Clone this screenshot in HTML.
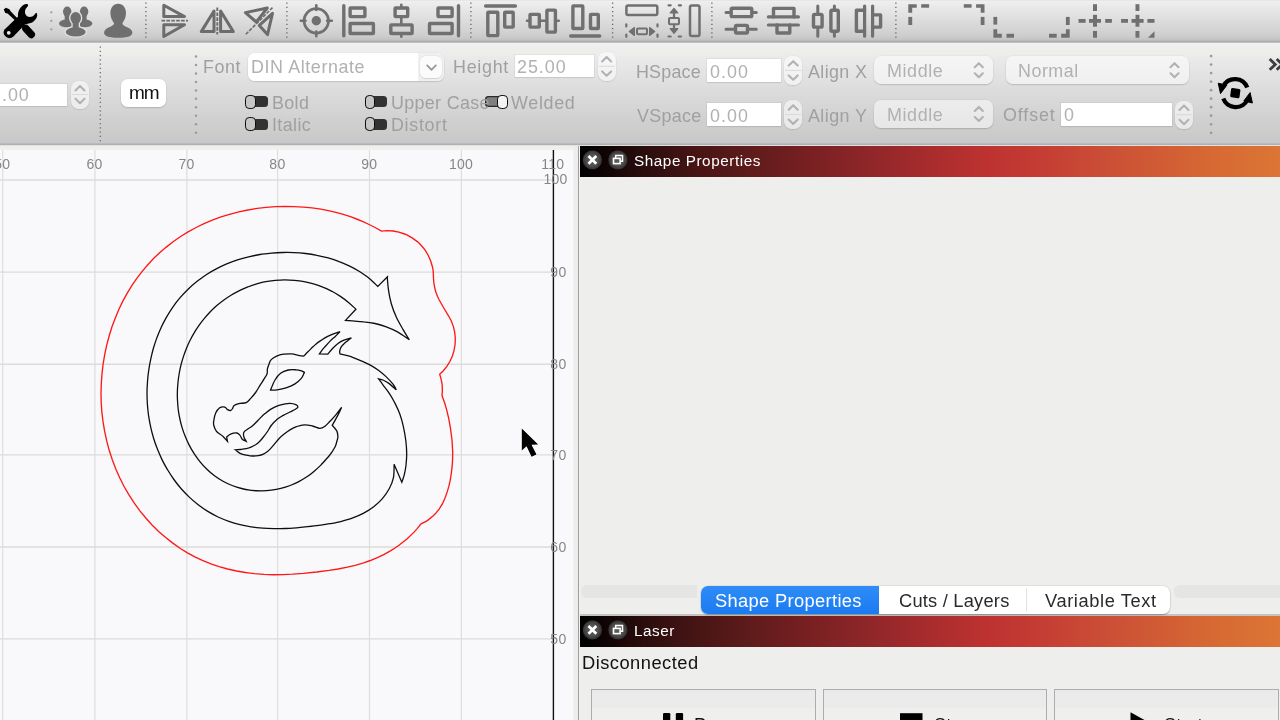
<!DOCTYPE html>
<html lang="en">
<head>
<meta charset="utf-8">
<title>LightBurn</title>
<style>
*{box-sizing:border-box;margin:0;padding:0}
html,body{width:1280px;height:720px;overflow:hidden;background:#eeeeec;font-family:"Liberation Sans",sans-serif;}
#tb1{position:absolute;left:0;top:0;width:1280px;height:43px;background:linear-gradient(#e2e2e0 0px,#efefed 1.500px,#ececec 4px,#e8e8e9 8px,#e2e2e2 15px,#dbdbdb 22px,#d4d4d3 30px,#cbcbcb 37px,#c2c2c2 40px,#adadad 41.500px,#b2b2b2 42.300px,#e2e2e2 43px);}
#tb2{position:absolute;left:0;top:43px;width:1280px;height:103px;background:linear-gradient(#f2f2f2 0px,#efefed 2px,#ededec 10px,#e9e9ea 17px,#e5e5e4 27px,#e0e0e1 38px,#dadad9 52px,#d5d5d6 66px,#d0d0d0 77px,#cdcdcc 88px,#cacacb 93px,#c9c9cb 99.500px,#bababc 100.500px,#b0b0b2 101.500px,#dcdcdc 102.300px,#efefed 103px);}
#canvas{position:absolute;left:0;top:146px;width:578px;height:574px;background:#f9f9fb;overflow:hidden}
#divider{position:absolute;left:577px;top:146px;width:3px;height:574px;background:linear-gradient(90deg,#ededeb 0,#ededeb .5px,#a4a4a6 .8px,#9c9c9e 1.200px,#a0a0a2 1.900px,#d8d8d8 2.200px,#f2f2f2 2.500px,#f0f0ee 3px)}
#panel{position:absolute;left:580px;top:146px;width:700px;height:574px;background:#eeeeec;overflow:hidden}
.title{position:absolute;left:0;width:700px;height:30.600px;background:linear-gradient(90deg,#000 0%,#0c0303 3%,#2a0d0d 9%,#451414 16%,#5e1b1b 24%,#761f21 32%,#8e2629 41%,#a82c2d 50%,#bd3231 58%,#c53d34 66%,#ca4c36 74%,#d05a35 82%,#d66933 90%,#dc7535 100%);color:#fff;font-size:15.5px;line-height:30px;white-space:nowrap}
.t{position:absolute;white-space:nowrap;line-height:1;will-change:transform}
.lbl{color:#a6a6a6}
.inp{position:absolute;background:#fff;box-shadow:0 0 0 1px rgba(0,0,0,.045),0 1px 1px rgba(0,0,0,.07)}
.sel{position:absolute;background:rgba(255,255,255,.52);border-radius:7px;box-shadow:0 0 0 .5px rgba(0,0,0,.05),0 1px 1.500px rgba(0,0,0,.15)}
.spin{position:absolute;border-radius:8px;background:rgba(255,255,255,.55);box-shadow:0 0 0 .5px rgba(0,0,0,.04),0 1px 1.2px rgba(0,0,0,.1)}
.tog{position:absolute;width:21.600px;height:11px;border-radius:3.500px;background:#323232}
.tog i{position:absolute;left:-.8px;top:-1.600px;width:10.800px;height:14.200px;border-radius:4.200px;border:1.900px solid #0c0c0c;background:#c6c6c6}
.tog.on{background:#7f7f7f;box-shadow:inset 0 0 0 1.300px #2a2a2a}
.tog.on i{left:auto;right:-.6px;background:#f2f2f2}
svg{position:absolute;left:0;top:0;overflow:visible;will-change:transform}
.btn{position:absolute;top:543.200px;height:40px;border:1px solid #adadad;background:linear-gradient(#e9e9e9 0,#ebebec 3px,#ebebec 17.500px,#efefed 19.500px,#efefed 40px);}
</style>
</head>
<body>
<div id="tb1">
<svg width="1280" height="43" viewBox="0 0 1280 43">
<!-- tools icon -->
<g fill="#000" stroke="none">
<path d="M3.700 9.400L5.900 7.700L9.400 9.300L10.400 10.900L17.500 18.500L15.500 20.700L7.600 13.500L5.300 12.900Z"/>
<path d="M22.600 26.200L24 24.800" stroke="#000" stroke-width="3.400"/>
<path d="M25.800 28.500L31.300 34.600" stroke="#000" stroke-width="7.400" stroke-linecap="round"/>
<path d="M4.300 29.800L18.100 16.600C17.500 13 19 8.500 23 5.300C25 4 27 3.700 27.800 4.500C28.500 5.200 28 6 27.600 6.600C24.500 9.500 24 13.500 27 16.300C30 18 33.500 16.500 35 14C35.600 13 36.600 12.800 37 13.600C37.800 16 36.500 19.500 33 22C30 23.800 27 23.600 25.200 24.300L13.200 36.800A5.800 5.800 0 0 1 4.300 29.800Z"/>
</g>
<circle cx="8.750" cy="32.800" r="1.900" fill="#e9e9e9"/>
<!-- dots -->
<g fill="#9b9b9b"><circle cx="51.3" cy="12.3" r="1.1"/><circle cx="51.3" cy="20.8" r="1.1"/><circle cx="51.3" cy="29.3" r="1.1"/></g>
<!-- group icon -->
<g fill="#6f6f6f">
<ellipse cx="67.200" cy="11.600" rx="4.200" ry="5.100"/><rect x="64.700" y="14" width="5" height="7"/><ellipse cx="66.600" cy="23.400" rx="7.600" ry="3.900"/>
<ellipse cx="84.100" cy="11.600" rx="4.200" ry="5.100"/><rect x="81.600" y="14" width="5" height="7"/><ellipse cx="84.700" cy="23.400" rx="7.600" ry="3.900"/>
<g stroke="#e1e1e1" stroke-width="2.600"><ellipse cx="75.700" cy="17.900" rx="5.300" ry="6"/><rect x="72.700" y="21" width="6" height="8"/><ellipse cx="75.700" cy="31.900" rx="10" ry="4.600"/></g>
<ellipse cx="75.700" cy="17.900" rx="5.300" ry="6"/><rect x="72.700" y="21" width="6" height="8"/><ellipse cx="75.700" cy="31.900" rx="10" ry="4.600"/>
</g>
<!-- user icon -->
<g fill="#6f6f6f">
<path d="M118.200 3.800C123 3.800 126 8 126 13C126 17.500 124 21 122.300 23.300L122.300 25.500L114.100 25.500L114.100 23.300C112.400 21 110.400 17.500 110.400 13C110.400 8 113.400 3.800 118.200 3.800Z"/>
<path d="M114.100 23.500C113.500 26.500 108 27 105.300 29.800C103.600 31.500 103.600 34 105.500 35.500C108.300 37.400 113 37.800 118.200 37.800C123.400 37.800 128.100 37.400 130.900 35.500C132.800 34 132.800 31.500 131.100 29.800C128.400 27 122.900 26.500 122.300 23.500Z"/>
</g>
<!-- separators -->
<g stroke="#666" stroke-width="1.300" stroke-dasharray="1.300 2.970" fill="none">
<path d="M145.900 2.400V38.500M286.900 2.400V38.500M470.900 2.400V38.500M612.600 2.400V38.500M711.900 2.400V38.500M895.900 2.400V38.500"/>
</g>
<g fill="none" stroke="#6c6c6c" stroke-width="3" stroke-linejoin="round" stroke-linecap="round">
<!-- flip V -->
<path d="M163.800 5.200L184.500 16.600H163.800Z M163.800 24.700H184.500L163.800 36.500Z"/>
<path d="M161.500 20.600H188" stroke-dasharray="3.600 1.300" stroke-linecap="butt" stroke-width="1.900"/>
<!-- flip H -->
<path d="M214 11L214 31.600H201.300Z M220.600 11L233.300 31.600H220.600Z"/>
<path d="M217.300 7.500V34.500" stroke-dasharray="3.600 1.300" stroke-linecap="butt" stroke-width="1.900"/>
<!-- flip diag -->
<path d="M245.400 12.600L267.300 8L256.300 22Z M272.500 13.300L267.500 34.600L259.300 25.400Z"/>
<path d="M245.800 34.300L272.500 7.600" stroke-dasharray="3.600 1.300" stroke-linecap="butt" stroke-width="1.600"/>
</g>
<!-- target -->
<g fill="none" stroke="#707070">
<circle cx="316.300" cy="20.800" r="12.200" stroke-width="2.800"/>
<path d="M300.800 20.800H305.500M327.100 20.800H331.800M316.300 5.300V10M316.300 31.600V36.300" stroke-width="2.600" stroke-linecap="round"/>
<circle cx="316.300" cy="20.800" r="4.700" fill="#707070" stroke="none"/>
</g>
<g fill="none" stroke="#707070" stroke-width="3.400" stroke-linejoin="round" stroke-linecap="round">
<!-- align left -->
<path d="M343.800 5.800V35.700"/>
<rect x="350.100" y="8" width="14.800" height="8.600" rx=".6"/>
<rect x="350.100" y="23.500" width="23.300" height="10" rx=".6"/>
<!-- align center H -->
<path d="M401.300 4.800V6.300M401.300 18.300V23.200M401.300 35.200V36.800" stroke-width="2.600"/>
<rect x="395.100" y="8" width="12.600" height="8.600" rx=".6"/>
<rect x="390.800" y="24.900" width="21.300" height="8.600" rx=".6"/>
<!-- align right -->
<path d="M458.500 5.800V35.700"/>
<rect x="438" y="8" width="14.100" height="8.600" rx=".6"/>
<rect x="429.500" y="23.500" width="22.600" height="10" rx=".6"/>
<!-- align top -->
<path d="M485.600 6H515.400"/>
<rect x="487.800" y="12.200" width="10" height="23.400" rx=".6"/>
<rect x="504.700" y="12.200" width="8.500" height="14.900" rx=".6"/>
<!-- align middle V -->
<path d="M527 20.800H528.300M541 20.800H545.200M557.100 20.800H558.700" stroke-width="2.600"/>
<rect x="530" y="14.400" width="9.300" height="12.700" rx=".6"/>
<rect x="546.900" y="10.100" width="8.500" height="22" rx=".6"/>
<!-- align bottom -->
<path d="M570.700 36H599.700"/>
<rect x="572.900" y="5.900" width="9.900" height="22.600" rx=".6"/>
<rect x="590.500" y="14.400" width="7.800" height="14.100" rx=".6"/>
</g>
<!-- same width -->
<g fill="none" stroke="#707070" stroke-linejoin="round" stroke-linecap="round">
<rect x="626.400" y="5.400" width="30.900" height="9.600" rx="1.800" stroke-width="2.500"/>
<rect x="637" y="28.400" width="10" height="5.800" rx="1" stroke-width="2"/>
<path d="M629.300 31.500L634.400 27.600V35.400ZM654.700 31.500L649.600 27.600V35.400Z" fill="#707070" stroke-width="1.200"/>
<path d="M626.300 24.300V26.500M626.300 34.600V36.800M657.500 24.300V26.500M657.500 34.600V36.800" stroke-width="2.200"/>
<!-- same height -->
<rect x="690" y="5.400" width="9.500" height="30.700" rx="1.800" stroke-width="2.500"/>
<rect x="669" y="17.900" width="10" height="6.400" rx="1" stroke-width="2"/>
<path d="M674 8.300L670.200 13H677.800ZM674 33.400L670.200 28.700H677.800Z" fill="#707070" stroke-width="1.200"/><path d="M674 13V17M674 25V28.700" stroke-width="2.200"/>
<path d="M668.500 5.300H670.700M678.800 5.300H681M668.500 36.500H670.700M678.800 36.500H681" stroke-width="2.200"/>
</g>
<g fill="none" stroke="#707070" stroke-width="3.400" stroke-linejoin="round" stroke-linecap="round">
<!-- dist V centers -->
<path d="M726 12.400H729.500M753.500 12.400H756.300M726 29.300H733.800M749.200 29.300H756.300" stroke-width="3"/>
<rect x="731.200" y="8.200" width="20.600" height="8.400" rx="1.200"/>
<rect x="735.500" y="25.400" width="12" height="7.600" rx="1.200"/>
<!-- dist V spacing -->
<path d="M768.400 16.900H798.400M768.400 25H798.400" stroke-width="3.200"/>
<path d="M773.500 16.900V8.400H794V16.900M777 25V33H789.800V25"/>
<!-- dist H centers -->
<path d="M817.800 6V12.700M817.800 28.800V36.200M834.400 6V8.700M834.400 33V36.200" stroke-width="3"/>
<rect x="813.500" y="14.400" width="8.600" height="12.700" rx="1.200"/>
<rect x="830.900" y="10.300" width="7.400" height="21" rx="1.200"/>
<!-- dist H spacing -->
<path d="M864.600 6V36.200M872.600 6V36.200" stroke-width="3.200"/>
<path d="M864.600 10.300H856.400V31.300H864.600M872.600 14.900H880.600V27.100H872.600"/>
</g>
<!-- corner icons -->
<g fill="#707070">
<path d="M908.300 4.200H916.700V7.700H912.200V12.700H908.300Z"/><rect x="921.200" y="4.200" width="7.900" height="3.500"/><rect x="908.300" y="16.900" width="3.900" height="8.100"/>
<path d="M984.500 4.200H976.100V7.700H980.700V12.700H984.500Z"/><rect x="963.800" y="4.200" width="7.800" height="3.500"/><rect x="980.700" y="16.900" width="3.800" height="8.100"/>
<path d="M993.400 37.700H1001.800V33.800H997.200V29.300H993.400Z"/><rect x="1006.500" y="33.800" width="7.500" height="3.900"/><rect x="993.400" y="16.900" width="3.800" height="7.700"/>
<path d="M1069.700 37.700H1061.200V33.800H1065.900V29.300H1069.700Z"/><rect x="1049" y="33.800" width="7.700" height="3.900"/><rect x="1065.900" y="16.900" width="3.800" height="8.100"/>
<!-- centre crosses -->
<rect x="1089" y="19" width="12" height="3.800"/><rect x="1093" y="14.800" width="4" height="11.900"/>
<rect x="1093" y="4.200" width="4" height="6.800"/><rect x="1093" y="31" width="4" height="6.700"/><rect x="1078.500" y="19" width="7.100" height="3.800"/><rect x="1105.200" y="19" width="6.700" height="3.800"/>
<rect x="1131.500" y="19" width="12.100" height="3.800"/><rect x="1135.500" y="14.800" width="3.900" height="11.900"/>
<rect x="1135.500" y="4.200" width="3.900" height="6.800"/><rect x="1135.500" y="31" width="3.900" height="6.700"/><rect x="1121.100" y="19" width="6.900" height="3.800"/><rect x="1147.400" y="19" width="7.100" height="3.800"/>
<path d="M1154.500 31.200V37.700H1147.900Z"/>
</g>
</svg>

</div>
<div id="tb2">
<div style="position:absolute;left:0;top:-43px;width:1280px;height:146px"><div class="inp" style="left:-4px;top:84px;width:71px;height:21.5px"></div>
<span class="t" style="left:1.60px;top:87.20px;font-size:17.90px;letter-spacing:0.912px;color:#b1b1b1;">.00</span>
<div class="spin" style="left:71px;top:80.5px;width:18px;height:28px"></div>
<div class="sel" style="left:121px;top:79px;width:45px;height:28px;background:#fff;border-radius:6.5px"></div>
<span class="t" style="left:128.60px;top:82.70px;font-size:19.00px;letter-spacing:-1.025px;color:#111;">mm</span>
<span class="t" style="left:203.40px;top:58.50px;font-size:17.90px;letter-spacing:0.550px;color:#a0a0a0;">Font</span>
<div class="sel" style="left:247.500px;top:53px;width:196.500px;height:27.800px;background:linear-gradient(90deg,#fff 0,#fff 169.500px,#f0f0f0 170.500px);border-radius:6.500px;box-shadow:0 0 0 .5px rgba(0,0,0,.05),0 1px 1.500px rgba(0,0,0,.12)"></div>
<div class="sel" style="left:420.200px;top:56px;width:21.400px;height:22px;background:#fbfbfb;border-radius:5.500px;box-shadow:0 0 0 .5px rgba(0,0,0,.05),0 .5px 1px rgba(0,0,0,.1)"></div>
<span class="t" style="left:250.60px;top:58.50px;font-size:17.90px;letter-spacing:0.596px;color:#b1b1b1;">DIN Alternate</span>
<span class="t" style="left:452.80px;top:58.50px;font-size:17.90px;letter-spacing:0.715px;color:#a0a0a0;">Height</span>
<div class="inp" style="left:514.8px;top:55.3px;width:79.200px;height:22.200px"></div>
<span class="t" style="left:516.90px;top:58.50px;font-size:17.90px;letter-spacing:0.963px;color:#b1b1b1;">25.00</span>
<div class="spin" style="left:598px;top:52px;width:17.700px;height:28.500px"></div>
<div class="tog" style="left:246.2px;top:96.3px"><i></i></div>
<div class="tog" style="left:246.2px;top:118.6px"><i></i></div>
<div class="tog" style="left:365.4px;top:96.3px"><i></i></div>
<div class="tog" style="left:365.4px;top:118.6px"><i></i></div>
<div class="tog on" style="left:485.4px;top:96.3px"><i></i></div>
<span class="t" style="left:272.00px;top:95.00px;font-size:17.90px;letter-spacing:0.350px;color:#a0a0a0;">Bold</span>
<span class="t" style="left:272.20px;top:117.00px;font-size:17.90px;letter-spacing:0.390px;color:#a0a0a0;">Italic</span>
<span class="t" style="left:391.20px;top:95.00px;font-size:17.90px;letter-spacing:0.325px;color:#a0a0a0;">Upper Case</span>
<span class="t" style="left:391.20px;top:117.00px;font-size:17.90px;letter-spacing:0.696px;color:#a0a0a0;">Distort</span>
<span class="t" style="left:511.30px;top:95.00px;font-size:17.90px;letter-spacing:0.690px;color:#a0a0a0;">Welded</span>
<span class="t" style="left:636.00px;top:63.60px;font-size:17.90px;letter-spacing:0.195px;color:#a0a0a0;">HSpace</span>
<span class="t" style="left:636.50px;top:107.70px;font-size:17.90px;letter-spacing:0.295px;color:#a0a0a0;">VSpace</span>
<div class="inp" style="left:707px;top:59px;width:74px;height:23px"></div>
<div class="inp" style="left:707px;top:103px;width:74px;height:23px"></div>
<span class="t" style="left:709.60px;top:63.60px;font-size:17.90px;letter-spacing:1.083px;color:#b1b1b1;">0.00</span>
<span class="t" style="left:709.60px;top:107.70px;font-size:17.90px;letter-spacing:1.083px;color:#b1b1b1;">0.00</span>
<div class="spin" style="left:784px;top:56.2px;width:18.400px;height:28.400px"></div>
<div class="spin" style="left:784px;top:100.300px;width:18.400px;height:28.400px"></div>
<span class="t" style="left:807.50px;top:63.60px;font-size:17.90px;letter-spacing:0.379px;color:#a0a0a0;">Align X</span>
<span class="t" style="left:807.50px;top:107.70px;font-size:17.90px;letter-spacing:0.421px;color:#a0a0a0;">Align Y</span>
<div class="sel" style="left:873.8px;top:56.2px;width:119.200px;height:27.800px"></div>
<div class="sel" style="left:873.8px;top:99.900px;width:119.200px;height:27.800px"></div>
<span class="t" style="left:886.60px;top:63.20px;font-size:17.90px;letter-spacing:0.615px;color:#b1b1b1;">Middle</span>
<span class="t" style="left:886.60px;top:106.80px;font-size:17.90px;letter-spacing:0.615px;color:#b1b1b1;">Middle</span>
<div class="sel" style="left:1005.8px;top:56.2px;width:182.800px;height:27.800px"></div>
<span class="t" style="left:1018.20px;top:63.20px;font-size:17.90px;letter-spacing:0.515px;color:#b1b1b1;">Normal</span>
<span class="t" style="left:1002.80px;top:106.80px;font-size:17.90px;letter-spacing:0.885px;color:#a0a0a0;">Offset</span>
<div class="inp" style="left:1061px;top:103.2px;width:110.700px;height:22.800px"></div>
<span class="t" style="left:1063.90px;top:106.80px;font-size:17.90px;letter-spacing:0.000px;color:#b1b1b1;">0</span>
<div class="spin" style="left:1175.2px;top:100.600px;width:17.600px;height:28.100px"></div>
<svg width="1280" height="146" viewBox="0 0 1280 146">
<g fill="none" stroke="#b2b2b2" stroke-width="2.100" stroke-linecap="round" stroke-linejoin="round">
<path d="M75.5 90.4L80.0 86.0L84.5 90.4M75.5 98.8L80.0 103.2L84.5 98.8M602.1 61.4L606.6 57.1L611.1 61.4M602.1 71.4L606.6 75.8L611.1 71.4M788.7 65.5L793.2 61.2L797.7 65.5M788.7 75.4L793.2 79.8L797.7 75.4M788.7 109.7L793.2 105.3L797.7 109.7M788.7 119.5L793.2 123.9L797.7 119.5M1179.5 110.0L1184.0 105.6L1188.5 110.0M1179.5 119.8L1184.0 124.2L1188.5 119.8M974.8 67.2L978.8 63.2L982.8 67.2M974.8 73.3L978.8 77.3L982.8 73.3M974.8 110.9L978.8 106.9L982.8 110.9M974.8 117.0L978.8 121.0L982.8 117.0M1170.5 67.2L1174.5 63.2L1178.5 67.2M1170.5 73.3L1174.5 77.3L1178.5 73.3"/>
<path d="M427.2 65.4L431.5 69.8L435.8 65.4" stroke="#9a9a9a" stroke-width="1.900"/>
</g>
<g stroke="#dadada" stroke-width="1">
<path d="M72.0 94.5H88.0"/>
<path d="M599.0 66.3H614.7"/>
<path d="M785.0 70.4H801.4"/>
<path d="M785.0 114.5H801.4"/>
<path d="M1176.2 114.7H1191.8"/>
</g>
<path d="M100.300 46.400V142" stroke="#6a6a6a" stroke-width="1.250" stroke-dasharray="1.300 2.950" fill="none"/>
<g fill="#9c9c9c"><circle cx="196" cy="56.6" r="1.250"/><circle cx="196" cy="65.0" r="1.250"/><circle cx="196" cy="73.5" r="1.250"/><circle cx="196" cy="82.0" r="1.250"/><circle cx="196" cy="90.4" r="1.250"/><circle cx="196" cy="98.8" r="1.250"/><circle cx="196" cy="107.3" r="1.250"/><circle cx="196" cy="115.8" r="1.250"/><circle cx="196" cy="124.2" r="1.250"/><circle cx="196" cy="132.7" r="1.250"/><circle cx="1211.100" cy="56.1" r="1.350"/><circle cx="1211.100" cy="64.6" r="1.350"/><circle cx="1211.100" cy="73.1" r="1.350"/><circle cx="1211.100" cy="81.7" r="1.350"/><circle cx="1211.100" cy="90.2" r="1.350"/><circle cx="1211.100" cy="98.7" r="1.350"/><circle cx="1211.100" cy="107.2" r="1.350"/><circle cx="1211.100" cy="115.7" r="1.350"/><circle cx="1211.100" cy="124.3" r="1.350"/><circle cx="1211.100" cy="132.8" r="1.350"/></g>
<g fill="none" stroke="#000" stroke-width="4.200" stroke-linecap="butt"><path d="M1223.200 86.300A13.200 13.200 0 0 1 1247.300 87.600"/><path d="M1247.400 99.900A13.200 13.200 0 0 1 1223.300 98.600"/></g>
<path d="M1218.200 83.200L1226.800 85.200L1220.500 93.600Z M1252.400 103L1243.800 101L1250.100 92.600Z" fill="#000" stroke="#000" stroke-width="1" stroke-linejoin="round"/>
<rect x="1230.600" y="88.400" width="9.400" height="9.400" rx="1.500" fill="#000" transform="rotate(8 1235.300 93.100)"/>
<path d="M1269.700 59L1275.300 64.400L1269.700 69.800M1276.700 59L1282.300 64.400L1276.700 69.800" fill="none" stroke="#3e3e3e" stroke-width="2.800"/>
</svg></div>
</div>
<div id="canvas">
<svg width="578" height="574" viewBox="0 146 578 574" font-family="Liberation Sans, sans-serif">
<rect x="0" y="146" width="578" height="3.800" fill="#efefed"/>
<rect x="573.400" y="146" width="5" height="574" fill="#ededeb"/>
<g stroke="#dedede" stroke-width="1.2" fill="none">
<path d="M2.7 150V720M94.9 150V720M186.9 150V720M277.6 150V720M369.5 150V720M461.4 150V720"/>
<path d="M0 180H553M0 272.1H553M0 364.2H553M0 454.9H553M0 547H553M0 638.900H553" stroke="#dcdcda" stroke-width="1.400"/>
</g>
<line x1="553.4" y1="150" x2="553.4" y2="720" stroke="#111" stroke-width="1.4"/>
<g fill="#868686" font-size="14" letter-spacing=".25" text-anchor="middle">
<text x="2.2" y="169.4">50</text><text x="94.5" y="169.4">60</text><text x="186.5" y="169.4">70</text><text x="277.4" y="169.4">80</text><text x="369.2" y="169.4">90</text><text x="461" y="169.4">100</text><text x="552.800" y="169.400">110</text>
<text x="555.500" y="184.400">100</text><text x="558.400" y="277">90</text><text x="558.400" y="369">80</text><text x="558.400" y="459.800">70</text><text x="558.400" y="551.800">60</text><text x="558.400" y="643.700">50</text>
</g>
<path d="M439.7 374.3L443.1 371.0L446.9 366.4L450.0 361.3L452.4 355.9L454.1 350.2L455.1 344.3L455.3 338.3L454.7 332.4L453.4 326.6L451.3 321.0L448.5 315.8L443.8 308.0L439.1 299.8L437.4 296.3L436.0 292.5L434.9 288.6L433.8 282.4L433.5 278.3L433.3 272.6L433.0 269.6L432.4 266.7L430.7 261.0L428.3 255.5L425.3 250.4L423.5 248.0L419.5 243.6L417.3 241.6L412.5 238.1L407.3 235.2L404.6 234.0L398.9 232.1L393.1 231.0L387.1 230.7L381.4 231.1L375.1 227.5L369.1 224.5L363.0 221.6L356.6 219.0L350.4 216.7L343.3 214.4L336.8 212.6L329.6 210.9L320.9 209.2L312.0 207.9L303.3 207.1L293.9 206.6L285.1 206.4L275.5 206.7L266.1 207.4L257.3 208.4L247.8 210.0L238.9 211.8L229.5 214.3L221.0 216.9L212.3 220.1L204.0 223.7L196.1 227.5L188.1 231.9L181.0 236.3L173.4 241.5L166.3 247.1L159.9 252.6L154.0 258.1L147.8 264.7L142.4 271.1L136.8 278.4L131.8 285.7L127.1 293.4L122.7 301.4L118.7 309.7L115.3 317.9L111.9 327.0L109.0 336.5L106.7 345.1L104.7 354.6L103.1 364.2L102.0 373.8L101.3 383.5L101.0 393.0L101.2 402.7L101.9 412.5L103.0 421.4L104.6 431.2L106.7 440.9L109.2 450.3L112.3 459.8L115.9 469.2L119.7 477.7L124.1 486.5L128.8 494.6L134.3 503.1L139.7 510.6L145.6 517.8L151.8 524.7L158.6 531.4L165.7 537.6L172.5 542.9L180.0 548.2L187.4 552.8L194.8 556.8L202.4 560.4L210.9 563.8L219.1 566.6L227.6 569.0L236.6 571.0L245.4 572.5L254.4 573.6L263.9 574.4L273.5 574.7L282.7 574.6L292.6 574.2L303.4 573.4L316.7 572.0L329.0 570.4L338.1 569.0L347.4 567.2L355.2 565.3L362.9 563.1L370.3 560.5L377.9 557.3L384.2 554.3L390.4 550.8L395.0 548.0L399.3 545.0L407.2 538.7L414.3 531.9L417.4 528.4L421.1 523.9L426.1 521.3L428.6 519.6L433.3 515.7L435.5 513.6L439.3 508.8L442.5 503.7L445.0 498.1L447.2 491.9L448.7 486.9L450.2 480.4L451.3 473.3L452.2 465.6L452.6 458.9L452.7 452.0L452.0 440.0L450.4 427.8L448.7 418.4L446.8 410.4L444.8 403.3L442.0 395.6L442.4 390.1L442.1 384.2L440.9 378.3Z" fill="none" stroke="#ff1818" stroke-width="1.35"/>
<path d="M387.5 276.7L377.8 286.4C376.4 285.1 372.3 280.9 369.3 278.5C366.4 276.1 363.1 273.9 359.9 271.8C356.6 269.8 353.2 267.9 349.7 266.2C346.3 264.5 342.7 262.9 339.1 261.6C335.5 260.2 331.9 259.0 328.2 257.9C324.5 256.9 320.7 256.0 316.9 255.3C313.2 254.5 309.4 253.9 305.6 253.5C301.8 253.1 298.0 252.8 294.1 252.6C290.3 252.4 286.5 252.4 282.7 252.5C278.9 252.6 275.1 252.8 271.3 253.1C267.5 253.5 263.7 253.9 259.9 254.5C256.1 255.1 252.4 255.9 248.6 256.8C244.9 257.7 241.2 258.7 237.5 259.9C233.9 261.1 230.3 262.4 226.7 263.9C223.2 265.4 219.7 267.1 216.3 268.9C212.8 270.7 209.5 272.6 206.2 274.7C203.0 276.9 199.8 279.1 196.8 281.5C193.8 283.9 190.8 286.5 188.1 289.2C185.3 291.9 182.6 294.7 180.1 297.7C177.6 300.6 175.2 303.7 173.0 306.8C170.8 310.0 168.7 313.3 166.8 316.6C164.9 319.9 163.1 323.3 161.5 326.8C159.9 330.3 158.4 333.8 157.0 337.4C155.7 341.0 154.5 344.6 153.4 348.3C152.4 351.9 151.5 355.6 150.7 359.3C149.9 363.0 149.2 366.8 148.7 370.5C148.1 374.3 147.7 378.0 147.5 381.8C147.2 385.6 147.0 389.4 147.0 393.2C147.0 397.0 147.2 400.8 147.4 404.5C147.7 408.3 148.1 412.1 148.6 415.9C149.2 419.6 149.9 423.4 150.7 427.1C151.5 430.8 152.5 434.5 153.6 438.2C154.7 441.8 156.0 445.5 157.4 449.1C158.8 452.6 160.4 456.2 162.0 459.6C163.7 463.1 165.6 466.5 167.6 469.8C169.5 473.1 171.7 476.4 173.9 479.5C176.2 482.7 178.6 485.8 181.2 488.7C183.8 491.6 186.5 494.4 189.3 497.1C192.1 499.8 195.1 502.3 198.2 504.7C201.3 507.1 204.5 509.3 207.8 511.4C211.1 513.4 214.6 515.3 218.1 517.0C221.6 518.6 225.2 520.1 228.9 521.4C232.5 522.7 236.3 523.8 240.0 524.7C243.7 525.6 247.5 526.3 251.3 526.9C255.1 527.5 258.9 527.9 262.7 528.2C266.5 528.5 270.2 528.6 274.0 528.7C277.8 528.7 281.5 528.7 285.3 528.5C289.0 528.4 292.7 528.1 296.4 527.8C300.2 527.5 303.9 527.2 307.6 526.7C311.3 526.3 315.0 525.9 318.8 525.4C322.6 524.9 326.4 524.4 330.1 523.7C333.9 523.0 337.8 522.3 341.6 521.3C345.3 520.3 349.1 519.3 352.8 517.9C356.5 516.5 360.2 515.0 363.7 513.1C367.2 511.2 370.6 509.1 373.7 506.7C376.8 504.3 379.8 501.6 382.4 498.6C385.0 495.6 387.3 492.4 389.2 488.8C391.1 485.3 392.7 481.5 393.5 477.4C394.3 473.3 394.0 466.4 394.1 464.2L401.8 482.2C402.2 481.0 403.5 478.0 404.2 475.2C404.9 472.4 405.6 468.8 406.0 465.3C406.4 461.8 406.7 458.2 406.7 454.1C406.7 450.0 406.4 445.3 405.8 440.5C405.2 435.7 404.1 429.7 403.1 425.3C402.1 420.9 401.1 417.6 399.8 414.0C398.5 410.4 397.0 407.3 395.3 403.9C393.6 400.5 391.7 396.9 389.6 393.8C387.5 390.6 384.7 387.2 382.9 384.8C381.1 382.3 379.3 379.9 378.6 378.9C379.3 379.1 381.2 379.3 382.9 380.0C384.5 380.7 386.2 381.5 388.5 383.1C390.8 384.7 395.1 388.7 396.4 389.8C395.8 388.9 394.7 386.4 393.0 384.2C391.3 382.0 388.7 379.2 386.3 376.9C383.9 374.6 381.2 372.4 378.4 370.3C375.6 368.2 372.4 366.2 369.4 364.6C366.4 363.0 363.9 362.0 360.6 360.6C357.3 359.2 352.8 357.2 349.4 356.1C346.0 355.0 341.6 354.3 340.0 353.9C339.9 353.4 339.5 352.2 339.7 351.1C339.9 350.0 340.2 348.6 341.1 347.2C342.0 345.8 343.3 344.4 345.0 342.8C346.7 341.2 350.3 338.6 351.4 337.8C350.1 338.2 346.1 339.3 343.9 340.2C341.7 341.1 340.1 341.9 338.3 343.3C336.5 344.7 334.6 346.5 332.8 348.3C331.1 350.1 328.6 353.2 327.8 354.2L319.4 353.9C319.8 353.3 320.8 351.8 321.7 350.6C322.6 349.4 323.5 348.4 325.0 346.7C326.5 345.0 328.9 342.3 330.6 340.6C332.3 338.9 333.4 338.2 335.0 336.7C336.6 335.2 339.2 332.5 340.0 331.7C338.8 332.1 334.9 333.4 332.8 334.2C330.7 335.0 329.1 335.7 327.2 336.7C325.3 337.7 323.5 338.8 321.7 340.0C319.9 341.2 318.0 342.4 316.1 343.9C314.2 345.4 312.4 347.4 310.6 349.1C308.9 350.8 306.8 353.0 305.6 354.2C304.4 355.4 303.8 355.9 303.4 356.2C302.5 356.1 300.2 355.7 298.3 355.3C296.4 354.9 294.1 354.1 291.7 353.9C289.3 353.7 286.3 353.9 283.9 354.2C281.5 354.5 278.9 355.2 277.2 355.8C275.5 356.4 274.6 357.1 273.5 357.8C272.4 358.6 271.4 359.2 270.6 360.3C269.8 361.4 269.4 363.0 268.9 364.4C268.4 365.8 267.7 367.4 267.4 368.9C267.1 370.4 267.5 372.0 267.2 373.3C266.9 374.6 266.7 374.9 265.6 376.7C264.5 378.5 262.3 381.8 260.6 384.4C258.9 387.0 257.3 390.1 255.6 392.5C253.9 394.9 252.1 396.9 250.5 398.6C248.9 400.3 248.0 401.9 246.2 402.7C244.5 403.5 241.7 403.1 240.0 403.4C238.3 403.7 236.8 404.2 235.8 404.6C234.8 405.0 234.3 405.2 233.8 405.8C233.2 406.4 233.1 407.7 232.6 408.5C232.1 409.3 231.4 410.3 230.6 410.5C229.8 410.7 228.3 410.1 227.5 409.7C226.7 409.2 226.5 408.3 225.8 407.8C225.2 407.3 224.6 406.9 223.6 406.9C222.6 406.9 221.0 406.8 219.7 407.8C218.4 408.8 216.8 410.7 215.8 412.8C214.8 414.9 214.1 418.5 213.8 420.6C213.4 422.7 213.3 423.7 213.8 425.5C214.3 427.3 215.1 429.7 216.6 431.5C218.1 433.3 221.0 434.6 222.8 436.2C224.6 437.8 226.7 440.4 227.5 441.3L226.7 437.0C227.3 436.5 228.9 434.8 230.6 434.1C232.3 433.4 235.3 432.8 236.9 433.0C238.5 433.2 239.1 434.3 240.0 435.4C240.9 436.4 241.3 438.3 242.3 439.3C243.3 440.3 245.6 441.0 246.2 441.3C245.9 440.6 244.3 438.5 243.9 437.0C243.5 435.5 243.2 433.6 243.9 432.2C244.6 430.9 246.3 430.2 247.8 429.1C249.3 428.0 250.8 427.4 252.9 425.5C255.0 423.6 258.4 419.9 260.4 417.9C262.4 415.9 263.3 415.0 265.0 413.6C266.7 412.2 268.4 410.7 270.5 409.4C272.6 408.1 275.2 406.7 277.5 405.8C279.8 404.9 281.9 404.6 284.0 404.2C286.1 403.8 288.0 403.3 290.0 403.4C292.0 403.5 294.5 404.0 295.8 404.6C297.1 405.2 298.0 406.4 297.9 407.2C297.8 408.0 296.3 408.7 295.0 409.5C293.7 410.3 291.9 411.0 290.0 412.0C288.1 413.0 285.4 414.2 283.3 415.4C281.2 416.6 279.5 417.3 277.5 419.0C275.5 420.7 272.9 423.4 271.2 425.5C269.6 427.6 268.8 429.6 267.5 431.5C266.2 433.4 264.7 435.4 263.4 437.0C262.1 438.6 261.1 440.0 259.8 441.3C258.5 442.6 257.1 443.8 255.6 444.8C254.1 445.7 252.6 446.5 251.0 447.2C249.4 447.9 248.0 448.3 246.2 448.7C244.5 449.1 242.3 449.3 240.5 449.5C238.7 449.7 236.2 449.7 235.3 449.8C236.1 450.3 238.2 452.4 240.0 453.3C241.8 454.2 243.9 454.8 246.0 455.2C248.1 455.6 250.4 455.9 252.5 456.0C254.6 456.1 256.5 455.9 258.3 455.6C260.1 455.3 261.9 454.8 263.4 454.1C264.9 453.4 266.2 452.5 267.5 451.5C268.8 450.5 270.0 449.3 271.2 447.9C272.5 446.5 273.9 444.8 275.2 443.2C276.5 441.6 277.6 440.1 279.1 438.5C280.7 436.9 282.7 435.2 284.5 433.8C286.3 432.4 288.0 431.1 290.0 429.9C292.0 428.7 294.1 427.5 296.5 426.6C298.9 425.8 301.5 424.9 304.2 424.8C306.9 424.7 309.9 425.4 312.5 426.0C315.1 426.6 317.7 428.3 319.8 428.3C321.9 428.3 323.3 427.4 325.0 426.2C326.7 425.1 328.2 423.2 330.0 421.3C331.8 419.4 333.7 417.4 335.6 415.1C337.5 412.8 340.6 408.6 341.6 407.3C341.0 408.6 339.5 412.1 337.9 415.1C336.3 418.1 333.2 423.6 332.2 425.3C333.0 426.2 335.8 429.0 336.8 430.9C337.7 432.8 337.8 434.9 337.9 436.5C338.0 438.1 337.6 438.8 337.1 440.5C336.6 442.2 336.3 444.5 335.0 447.0C333.7 449.5 331.8 452.5 329.4 455.5C327.0 458.5 323.3 462.4 320.8 465.1C318.2 467.7 316.5 469.3 314.2 471.2C311.9 473.2 309.5 475.1 306.9 476.8C304.3 478.5 301.6 480.1 298.8 481.6C296.1 483.0 293.1 484.4 290.2 485.5C287.2 486.6 284.1 487.6 280.9 488.4C277.8 489.2 274.6 489.8 271.3 490.2C268.1 490.7 264.8 490.9 261.5 490.9C258.1 490.9 254.8 490.8 251.5 490.4C248.2 490.0 244.9 489.4 241.6 488.5C238.4 487.7 235.2 486.7 232.1 485.5C228.9 484.2 225.9 482.8 223.0 481.2C220.0 479.5 217.2 477.7 214.5 475.7C211.8 473.7 209.3 471.5 206.9 469.2C204.5 466.9 202.2 464.4 200.1 461.8C198.0 459.3 196.1 456.6 194.3 453.9C192.5 451.1 190.8 448.3 189.3 445.4C187.8 442.5 186.5 439.6 185.3 436.6C184.1 433.7 183.0 430.6 182.1 427.6C181.2 424.6 180.4 421.5 179.8 418.5C179.1 415.5 178.6 412.4 178.2 409.3C177.9 406.3 177.6 403.2 177.5 400.2C177.3 397.2 177.3 394.2 177.4 391.2C177.5 388.2 177.7 385.2 178.0 382.2C178.3 379.3 178.7 376.4 179.2 373.5C179.7 370.6 180.3 367.7 181.0 364.9C181.7 362.0 182.6 359.2 183.5 356.4C184.4 353.7 185.4 350.9 186.5 348.2C187.6 345.5 188.8 342.9 190.1 340.3C191.4 337.7 192.8 335.1 194.3 332.6C195.7 330.1 197.3 327.7 199.0 325.3C200.7 322.9 202.5 320.5 204.4 318.3C206.3 316.0 208.3 313.8 210.3 311.7C212.4 309.6 214.6 307.6 216.8 305.6C219.1 303.7 221.4 301.8 223.9 300.0C226.3 298.2 228.8 296.6 231.4 295.0C234.0 293.4 236.7 292.0 239.4 290.6C242.2 289.3 245.0 288.0 247.9 286.9C250.7 285.8 253.7 284.8 256.7 283.9C259.7 283.1 262.7 282.3 265.8 281.7C268.9 281.2 272.0 280.7 275.2 280.4C278.3 280.1 281.5 279.9 284.7 279.9C287.9 279.9 291.1 280.0 294.4 280.3C297.6 280.6 300.8 281.0 304.0 281.6C307.2 282.2 310.4 283.0 313.5 283.9C316.7 284.8 319.8 285.9 322.8 287.2C325.9 288.4 328.9 289.8 331.9 291.3C334.8 292.9 337.7 294.6 340.4 296.4C343.2 298.3 345.9 300.3 348.5 302.4C351.1 304.5 354.7 308.1 355.9 309.2L345.5 320.4C346.7 320.5 349.5 320.7 352.5 320.9C355.5 321.1 360.0 321.3 363.8 321.8C367.5 322.2 371.2 322.7 375.0 323.5C378.8 324.3 382.6 325.4 386.3 326.8C390.1 328.2 393.7 329.7 397.5 331.9C401.3 334.1 407.3 338.5 409.3 339.8C408.3 338.1 405.2 333.4 403.1 329.6C401.0 325.9 398.4 321.6 396.4 317.3C394.4 313.0 392.6 308.3 391.3 303.8C390.0 299.2 389.1 294.4 388.5 290.2C387.9 286.1 387.6 281.3 387.4 279.0C387.2 276.7 387.5 277.1 387.5 276.7Z" fill="none" stroke="#0e0e0e" stroke-width="1.3" stroke-linejoin="miter"/>
<path d="M270.6 390.0C271.3 388.3 273.3 382.8 275.0 380.0C276.7 377.2 278.4 375.0 280.6 373.3C282.8 371.6 285.7 370.6 288.3 370.0C290.9 369.4 293.9 369.7 296.1 369.8C298.3 369.9 300.1 370.4 301.5 370.8C302.9 371.2 303.9 372.1 304.4 372.4C303.9 373.3 303.3 375.9 301.7 377.8C300.1 379.7 297.6 382.2 295.0 383.9C292.4 385.6 289.1 386.8 286.1 387.8C283.1 388.8 279.8 389.4 277.2 389.8C274.6 390.2 271.7 390.0 270.6 390.0Z" fill="none" stroke="#0e0e0e" stroke-width="1.3"/>
<path d="M521.800 428.400L521.800 450.400L526.600 446.300L531.500 456.800L536.500 454.500L531.500 444.700L538.200 444.400Z" fill="#000" stroke="#fff" stroke-width="1.500" stroke-linejoin="round" paint-order="stroke"/>
</svg>
</div>
<div id="divider"></div>
<div id="panel">
<div class="title" style="top:0"></div>
<div class="title" style="top:469.500px;height:31px"></div>
<span class="t" style="left:54.00px;top:7.40px;font-size:15.30px;letter-spacing:0.542px;color:#fff;">Shape Properties</span>
<span class="t" style="left:54.20px;top:477.40px;font-size:15.30px;letter-spacing:0.544px;color:#fff;">Laser</span>
<div style="position:absolute;left:.5px;top:438.800px;width:116.500px;height:13.400px;border-radius:6px 0 0 6px;background:#e5e5e4"></div><div style="position:absolute;left:594.400px;top:438.800px;width:120px;height:13.400px;border-radius:6px 0 0 6px;background:#e5e5e4"></div><div style="position:absolute;left:0;top:468px;width:700px;height:2px;background:#c4c4c2"></div>
<div style="position:absolute;left:121.200px;top:439.500px;width:469px;height:28px;border-radius:7px;background:#fff;box-shadow:0 0 0 .5px rgba(0,0,0,.1),0 1px 1.500px rgba(0,0,0,.25)"></div>
<div style="position:absolute;left:121.200px;top:439.500px;width:178.300px;height:28px;border-radius:7px 0 0 7px;background:linear-gradient(#2f8cf8,#1a7af0)"></div>
<div style="position:absolute;left:445.700px;top:442px;width:1px;height:23px;background:#e2e2e2"></div>
<span class="t" style="left:135.40px;top:445.60px;font-size:18.30px;letter-spacing:0.347px;color:#fff;">Shape Properties</span>
<span class="t" style="left:318.50px;top:445.60px;font-size:18.30px;letter-spacing:0.217px;color:#2a2a2a;">Cuts / Layers</span>
<span class="t" style="left:465.20px;top:445.60px;font-size:18.30px;letter-spacing:0.594px;color:#2a2a2a;">Variable Text</span>
<span class="t" style="left:2.40px;top:508.20px;font-size:18.30px;letter-spacing:0.480px;color:#111;">Disconnected</span>
<div class="btn" style="left:10.7px;width:225.6px"></div>
<div class="btn" style="left:243.3px;width:223.9px"></div>
<div class="btn" style="left:473.6px;width:225.9px"></div>
<span class="t" style="left:114.30px;top:570.40px;font-size:18.30px;letter-spacing:0.000px;color:#111;">Pause</span>
<span class="t" style="left:353.50px;top:570.40px;font-size:18.30px;letter-spacing:0.000px;color:#111;">Stop</span>
<span class="t" style="left:583.50px;top:570.40px;font-size:18.30px;letter-spacing:0.000px;color:#111;">Start</span>
<svg width="700" height="574" viewBox="580 146 700 574">
<defs><radialGradient id="cb"><stop offset="0" stop-color="#5e5e5e"/><stop offset=".6" stop-color="#505050"/><stop offset=".9" stop-color="#3a3838"/><stop offset="1" stop-color="#2a2626"/></radialGradient></defs>
<circle cx="592.400" cy="159.900" r="9.700" fill="url(#cb)"/><circle cx="617.900" cy="159.900" r="9.700" fill="url(#cb)"/>
<circle cx="592.400" cy="629.900" r="9.700" fill="url(#cb)"/><circle cx="617.900" cy="629.900" r="9.700" fill="url(#cb)"/>
<path d="M588.500 156.0L596.300 163.8M596.300 156.0L588.500 163.8" stroke="#fff" stroke-width="2.700" fill="none"/>
<path d="M615.700 157.9V155.6H622.500V161.2H620.500" stroke="#fff" stroke-width="1.500" fill="none"/>
<rect x="613.500" y="158.4" width="6.600" height="5.200" stroke="#fff" stroke-width="1.600" fill="#5d5959"/>
<path d="M588.500 626.0L596.300 633.8M596.300 626.0L588.500 633.8" stroke="#fff" stroke-width="2.700" fill="none"/>
<path d="M615.700 627.9V625.6H622.500V631.2H620.500" stroke="#fff" stroke-width="1.500" fill="none"/>
<rect x="613.500" y="628.4" width="6.600" height="5.200" stroke="#fff" stroke-width="1.600" fill="#5d5959"/>
<rect x="663" y="713.100" width="7.300" height="10" rx="1.200" fill="#000"/><rect x="675.800" y="713.100" width="7.300" height="10" rx="1.200" fill="#000"/>
<rect x="900" y="713.200" width="22.500" height="10" fill="#000"/>
<path d="M1130.500 712.200L1149 722.500L1130.500 733Z" fill="#000"/>
</svg>
</div>
</body>
</html>
